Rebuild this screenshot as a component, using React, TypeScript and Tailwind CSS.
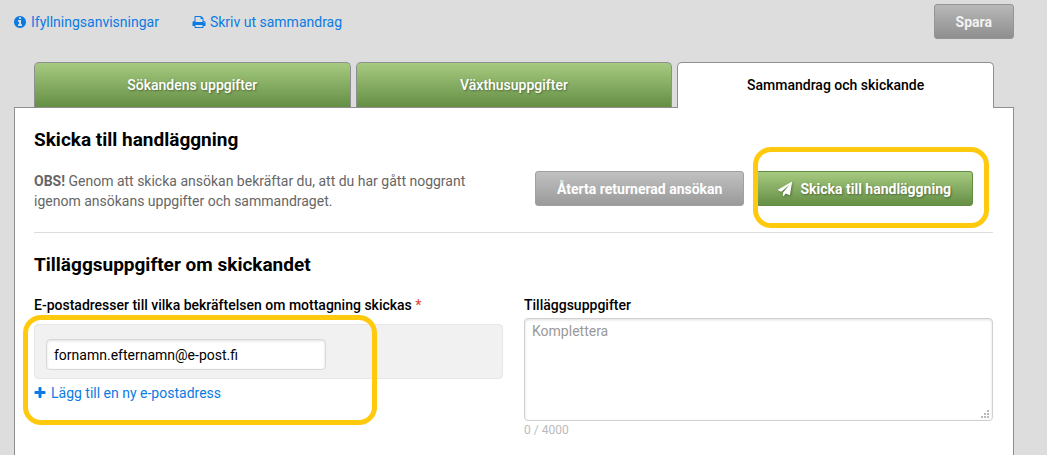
import { useState } from "react"
import clsx from "clsx"

const ICONS = {
  info: "M1152 1376v-160q0-14-9-23t-23-9h-96v-512q0-14-9-23t-23-9h-320q-14 0-23 9t-9 23v160q0 14 9 23t23 9h96v320h-96q-14 0-23 9t-9 23v160q0 14 9 23t23 9h448q14 0 23-9t9-23zm-128-896v-160q0-14-9-23t-23-9h-192q-14 0-23 9t-9 23v160q0 14 9 23t23 9h192q14 0 23-9t9-23zm640 416q0 209-103 385.5t-279.5 279.5-385.5 103-385.5-103-279.5-279.5-103-385.5 103-385.5 279.5-279.5 385.5-103 385.5 103 279.5 279.5 103 385.5z",
  print: "M448 1536h896v-256h-896v256zm0-640h896v-384h-160q-40 0-68-28t-28-68v-160h-640v640zm1152 64q0-26-19-45t-45-19-45 19-19 45 19 45 45 19 45-19 19-45zm128 0v416q0 13-9.5 22.5t-22.5 9.5h-224v160q0 40-28 68t-68 28h-960q-40 0-68-28t-28-68v-160h-224q-13 0-22.5-9.5t-9.5-22.5v-416q0-79 56.5-135.5t135.5-56.5h64v-544q0-40 28-68t68-28h672q40 0 88 20t76 48l152 152q28 28 48 76t20 88v256h64q79 0 135.5 56.5t56.5 135.5z",
  plane: "M1764 11q33 24 27 64l-256 1536q-5 29-32 45-14 8-31 8-11 0-24-5l-453-185-242 295q-18 23-49 23-13 0-22-4-19-7-30.5-23.5t-11.5-36.5v-349l864-1059-1069 925-395-162q-37-14-40-55-2-40 32-59l1664-960q15-9 32-9 20 0 36 11z",
  plus: "M1600 736v192q0 40-28 68t-68 28h-416v416q0 40-28 68t-68 28h-192q-40 0-68-28t-28-68v-416h-416q-40 0-68-28t-28-68v-192q0-40 28-68t68-28h416v-416q0-40 28-68t68-28h192q40 0 68 28t28 68v416h416q40 0 68 28t28 68z",
}

const TABS = ["Sökandens uppgifter", "Växthusuppgifter", "Sammandrag och skickande"]
const MAX_LENGTH = 4000

function Icon({ name, className }: { name: keyof typeof ICONS; className?: string }) {
  return (
    <svg viewBox="0 0 1792 1792" fill="currentColor" aria-hidden="true" className={clsx("shrink-0", className)}>
      <path d={ICONS[name]} />
    </svg>
  )
}

// yellow marker ring around the part the user should look at
function Marker({ className }: { className: string }) {
  return (
    <span
      aria-hidden="true"
      className={clsx("pointer-events-none absolute z-20 rounded-[18px] border-5 border-[#ffc90e]", className)}
    />
  )
}

export default function App() {
  const [active, setActive] = useState(2)
  const [email, setEmail] = useState("fornamn.efternamn@e-post.fi")
  const [details, setDetails] = useState("")

  return (
    <div className="flex min-h-screen flex-col bg-[#ddd] pr-[33px] pl-3.5 font-[Roboto,sans-serif] text-sm text-black">
      <header className="flex items-center justify-between pt-1">
        <nav className="flex gap-[33px] text-[#0b7be3]">
          <a href="#anvisningar" className="flex items-center gap-1">
            <Icon name="info" className="-ml-px size-3.5" />
            Ifyllningsanvisningar
          </a>
          <a href="#utskrift" className="flex items-center gap-1">
            <Icon name="print" className="size-3.5" />
            Skriv ut sammandrag
          </a>
        </nav>
        <button
          type="button"
          className="h-[35px] rounded-[3px] border border-[#959595] bg-linear-to-b from-[#b8b8b8] to-[#8f8f8f] px-[21px] font-bold text-[#f2f2f2]"
        >
          Spara
        </button>
      </header>

      <div role="tablist" className="mt-[23px] grid grid-cols-3 gap-[5px] px-5">
        {TABS.map((tab, i) => (
          <button
            key={tab}
            type="button"
            role="tab"
            aria-selected={i === active}
            onClick={() => setActive(i)}
            className={clsx(
              "rounded-t-[5px] border border-b-0 border-[#8f8f8f] font-medium",
              i === active
                ? "relative z-10 -mb-px h-[46px] bg-white pb-0.5 text-black"
                : "h-[45px] bg-linear-to-b from-[#a6ca80] to-[#658f45] text-white [text-shadow:1px_1px_2px_rgba(0,0,0,0.35)]"
            )}
          >
            {tab}
          </button>
        ))}
      </div>

      <main className="flex-1 border border-b-0 border-[#8f8f8f] bg-white pt-5 pr-5 pl-[19px]">
        <h2 className="text-[19px] leading-6 font-bold">Skicka till handläggning</h2>
        <div className="flex items-start justify-between border-b border-[#ddd] pt-[19px] pr-5 pb-[21px]">
          <p className="w-[440px] leading-5 text-[#666]">
            <strong className="font-bold">OBS!</strong> Genom att skicka ansökan bekräftar du, att du har gått noggrant
            igenom ansökans uppgifter och sammandraget.
          </p>
          <div className="flex gap-3">
            <button
              type="button"
              className="h-[35px] rounded-[3px] border border-[#a0a0a0] bg-linear-to-b from-[#c1c1c1] to-[#9a9a9a] px-[21px] font-bold text-white"
            >
              Återta returnerad ansökan
            </button>
            <div className="relative">
              <button
                type="button"
                className="flex h-[35px] items-center gap-2 rounded-[3px] border border-[#5f8c41] bg-linear-to-b from-[#a6ca80] to-[#658f45] px-[21px] font-bold text-white [text-shadow:1px_1px_2px_rgba(0,0,0,0.35)]"
              >
                <Icon name="plane" className="size-3.5 drop-shadow-[1px_1px_1px_rgba(0,0,0,0.3)]" />
                Skicka till handläggning
              </button>
              <Marker className="-top-6 -right-4 -bottom-[22px] -left-[3px]" />
            </div>
          </div>
        </div>

        <h2 className="mt-5 text-[19px] leading-6 font-bold">Tilläggsuppgifter om skickandet</h2>
        <div className="mt-[18px] grid grid-cols-2 gap-[21px]">
          <div>
            <label htmlFor="email" className="block leading-5 font-medium">
              E-postadresser till vilka bekräftelsen om mottagning skickas <span className="text-[#e04b4b]">*</span>
            </label>
            <div className="relative mt-[9px]">
              <div className="rounded-[4px] border border-[#e6e6e6] bg-[#f1f1f1] px-[11px] pt-3.5 pb-2">
                <input
                  id="email"
                  type="email"
                  value={email}
                  onChange={(e) => setEmail(e.target.value)}
                  className="block h-[31px] w-[280px] rounded-[4px] border border-[#d8d8d8] bg-white px-[7px] shadow-[inset_0_1px_3px_rgba(0,0,0,0.12)]"
                />
              </div>
              <a href="#ny-adress" className="mt-1 inline-flex items-center gap-1 leading-5 text-[#0b7be3]">
                <Icon name="plus" className="-ml-px size-3.5" />
                Lägg till en ny e-postadress
              </a>
              <Marker className="-top-[9px] -left-[11px] h-[110px] w-[354px]" />
            </div>
          </div>

          <div>
            <label htmlFor="details" className="block leading-5 font-medium">
              Tilläggsuppgifter
            </label>
            <div className="relative mt-[3px]">
              <textarea
                id="details"
                placeholder="Komplettera"
                maxLength={MAX_LENGTH}
                value={details}
                onChange={(e) => setDetails(e.target.value)}
                className="block h-[103px] w-full resize-none rounded-[4px] border border-[#d0d0d0] bg-white px-[7px] py-0.5 leading-5 shadow-[inset_0_1px_3px_rgba(0,0,0,0.12)] placeholder:text-[#999]"
              />
              <svg
                viewBox="0 0 8 8"
                fill="#b9b9b9"
                shapeRendering="crispEdges"
                aria-hidden="true"
                className="pointer-events-none absolute right-1 bottom-[3px] size-2"
              >
                <path d="M6 0h2v2H6zM3 3h2v2H3zM6 3h2v2H6zM0 6h2v2H0zM3 6h2v2H3zM6 6h2v2H6z" />
              </svg>
            </div>
            <p className="text-xs leading-[18px] text-[#bbb]">
              {details.length} / {MAX_LENGTH}
            </p>
          </div>
        </div>
      </main>
    </div>
  )
}
